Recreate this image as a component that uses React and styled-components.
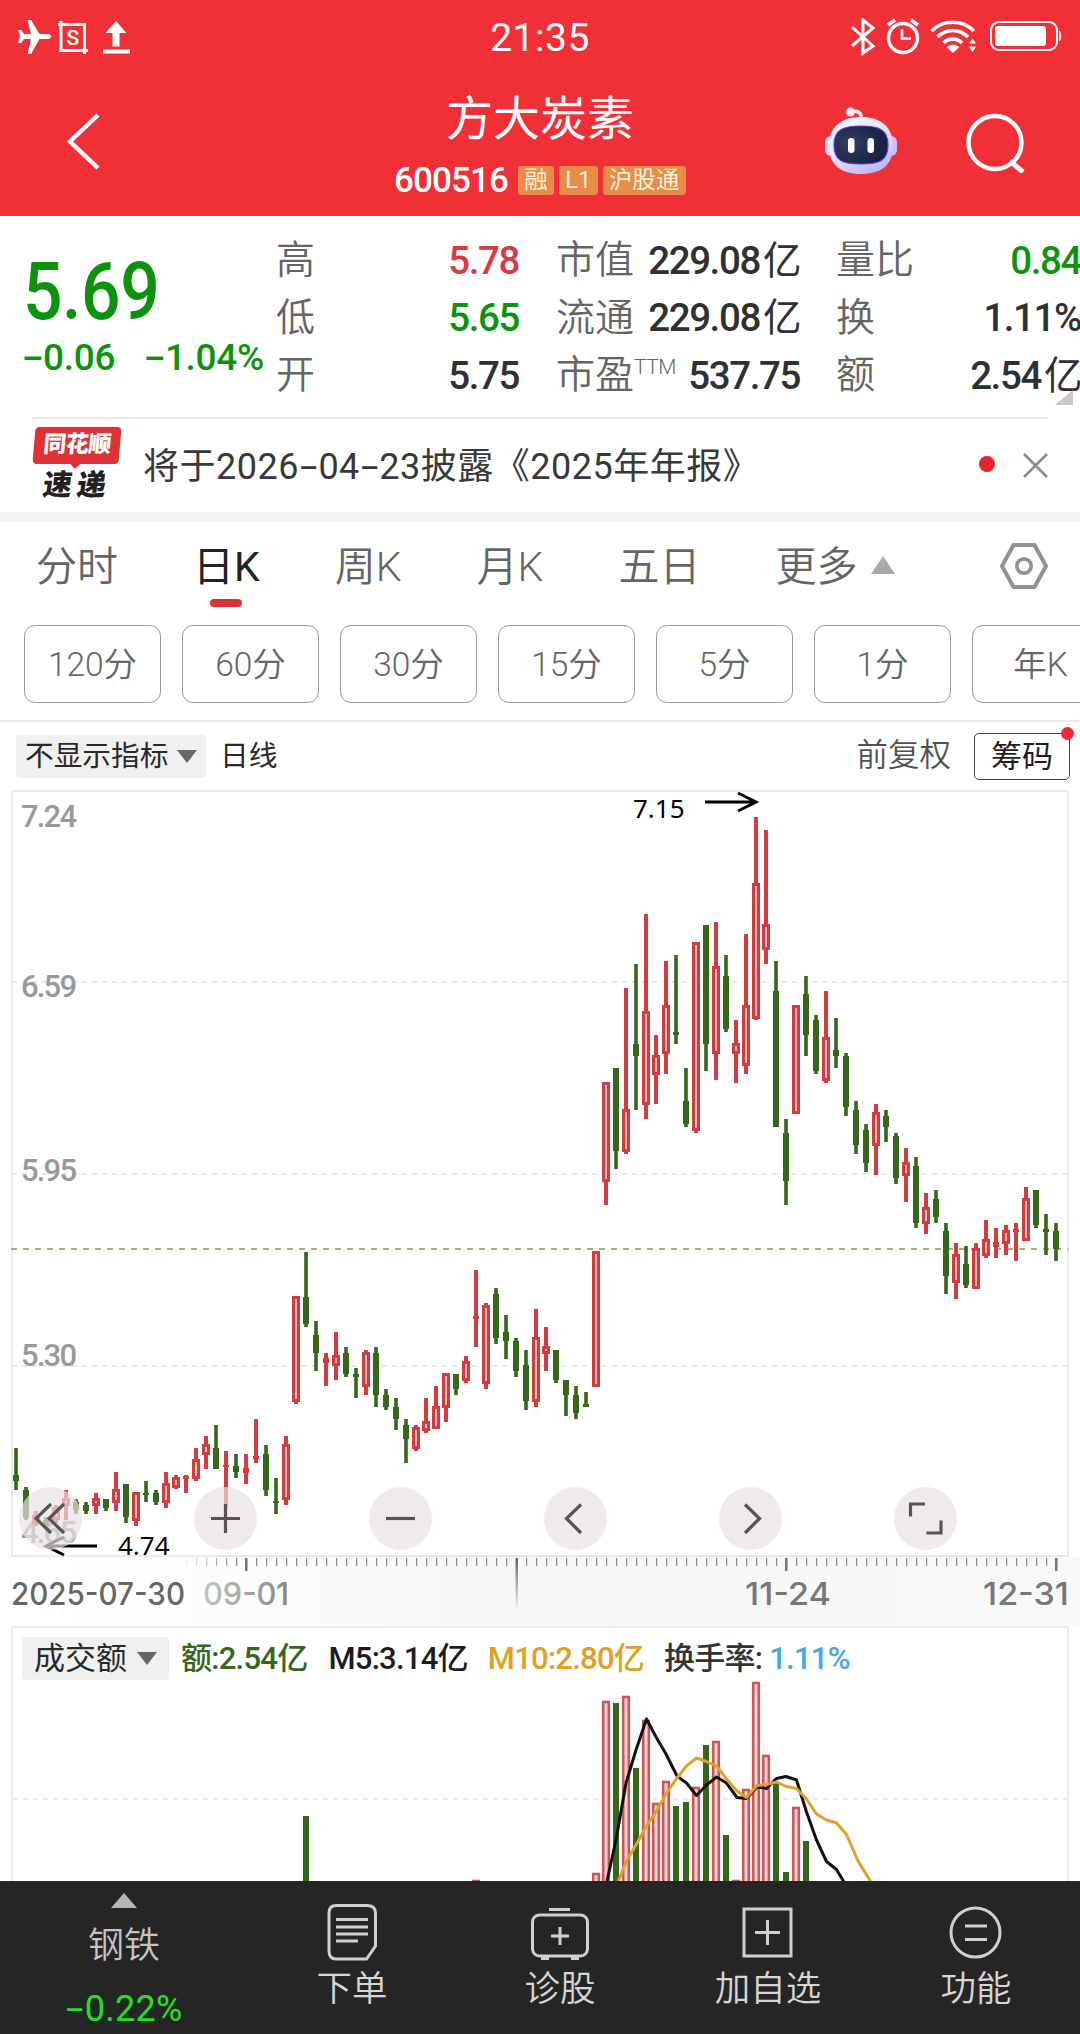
import React, { useState } from 'react';
import styled, { createGlobalStyle, css } from 'styled-components';

const GlobalStyle = createGlobalStyle`
  * {
    box-sizing: border-box;
  }
  body {
    margin: 0;
    background: #fff;
    font-family: Roboto, 'Noto Sans CJK SC', sans-serif;
    line-height: 1;
    overflow: hidden;
  }
  button {
    font: inherit;
    border: none;
    background: none;
    padding: 0;
    margin: 0;
    line-height: 1;
  }
`;

const Screen = styled.div`
  width: 1080px;
  height: 2034px;
  display: flex;
  flex-direction: column;
  background: #fff;
  overflow: hidden;
  white-space: nowrap;
`;

const Header = styled.header`
  height: 216px;
  flex: none;
  background: #f03036;
  color: #fff;
`;

const StatusBar = styled.div`
  height: 74px;
  display: grid;
  grid-template-columns: 1fr auto 1fr;
  align-items: center;
  padding: 0 17px;
  svg {
    display: block;
  }
`;

const StatusIcons = styled.div`
  display: flex;
  align-items: center;
  justify-content: ${(props) => (props.$right ? 'flex-end' : 'flex-start')};
`;

const Clock = styled.span`
  font-size: 39px;
  letter-spacing: 0.5px;
  padding-top: 2px;
`;

const TitleBar = styled.div`
  height: 142px;
  display: grid;
  grid-template-columns: 394px 1fr 394px;
`;

const BackButton = styled.button`
  justify-self: start;
  align-self: start;
  margin: 39px 0 0 65px;
  svg {
    display: block;
  }
`;

const TitleBlock = styled.div`
  display: flex;
  flex-direction: column;
`;

const StockName = styled.h1`
  margin: 21px 0 0;
  font-size: 47px;
  font-weight: 400;
  text-align: center;
`;

const CodeRow = styled.div`
  display: flex;
  align-items: center;
  margin-top: 20px;
  gap: 5px;
`;

const StockCode = styled.span`
  font-size: 35px;
  font-weight: 500;
  letter-spacing: -0.9px;
  margin-right: 5px;
  padding-top: 1px;
`;

const Tag = styled.span`
  height: 29px;
  line-height: 28px;
  padding: 0 6.3px;
  border-radius: 3px;
  background: #e98c49;
  color: #fff0d8;
  font-size: 23.5px;
`;

const HeaderTools = styled.div`
  display: flex;
  padding: 33px 0 0 138px;
  svg {
    display: block;
  }
`;

const Quote = styled.section`
  height: 201px;
  flex: none;
  position: relative;
  display: grid;
  grid-template-columns: 276px 242px 38px 243px 37px 244px;
  padding-top: 16px;
`;

const PriceBlock = styled.div`
  padding: 20px 0 0 23px;
  color: #0c930c;
  font-weight: 500;
`;

const Price = styled.div`
  font-size: 80px;
  letter-spacing: -0.5px;
  width: 150px;
  transform: scaleX(0.87);
  transform-origin: left center;
`;

const Change = styled.div`
  display: flex;
  justify-content: space-between;
  width: 241px;
  margin-top: 7px;
  font-size: 37px;
  letter-spacing: -0.3px;
`;

const StatColumn = styled.div`
  grid-column: ${(props) => props.$col};
`;

const Stat = styled.div`
  height: 57.5px;
  display: flex;
  justify-content: space-between;
  align-items: center;
`;

const StatLabel = styled.span`
  font-size: 39px;
  font-weight: 350;
  color: #646464;
  sup {
    font-size: 21px;
    font-weight: 300;
    vertical-align: 14px;
    line-height: 0;
    letter-spacing: -0.5px;
  }
`;

const StatValue = styled.span`
  font-size: 38.5px;
  font-weight: 500;
  letter-spacing: -1.4px;
  margin-right: -1px;
  color: ${(props) => props.$color || '#303030'};
`;

const Unit = styled.span`
  font-weight: 400;
  margin-left: 3px;
`;

const Corner = styled.i`
  position: absolute;
  right: 7px;
  top: 174px;
  border-left: 18px solid transparent;
  border-bottom: 15px solid #c9c9c9;
`;

const News = styled.section`
  height: 95px;
  flex: none;
  margin: 0 32px;
  border-top: 2px solid #e9eaea;
  display: flex;
  align-items: center;
`;

const NewsBadge = styled.div`
  width: 90px;
  height: 74px;
  margin-top: -3px;
  display: flex;
  flex-direction: column;
  align-items: center;
  font-weight: 900;
`;

const BadgeTop = styled.span`
  position: relative;
  width: 86px;
  height: 37px;
  line-height: 35px;
  border-radius: 4px;
  background: #de3236;
  color: #fff;
  font-size: 23px;
  letter-spacing: -0.5px;
  text-align: center;
  transform: skewX(-5deg);
  &::after {
    content: '';
    position: absolute;
    left: 37px;
    top: 36px;
    border: 6px solid transparent;
    border-top-color: #de3236;
    border-bottom: 0;
  }
`;

const BadgeBottom = styled.span`
  margin-top: 7px;
  font-size: 29px;
  letter-spacing: 5px;
  color: #222;
  transform: skewX(-8deg);
`;

const NewsText = styled.p`
  margin: 2px 0 0 21px;
  flex: 1;
  font-size: 36px;
  font-weight: 400;
  letter-spacing: 0.5px;
  color: #383838;
`;

/* wide hyphen, as the number font of the app draws it */
const DashBox = styled.span`
  display: inline-block;
  width: 0.54em;
  text-align: center;
  letter-spacing: 0;
  transform: scaleX(1.75);
`;

const RedDot = styled.i`
  width: 16px;
  height: 16px;
  border-radius: 50%;
  background: #e3262e;
  margin: -3px 28px 0 0;
`;

const Band = styled.div`
  height: 10px;
  flex: none;
  background: #f4f3f4;
`;

const Tabs = styled.nav`
  height: 103px;
  flex: none;
  display: flex;
  align-items: flex-start;
  padding: 23px 32px 0 36px;
`;

const Tab = styled.button`
  position: relative;
  height: 44px;
  margin-right: ${(props) => props.$gap}px;
  font-size: 41px;
  font-weight: 350;
  color: #646464;
  ${(props) => props.$active && css`
    font-weight: 400;
    color: #222;
    &::after {
      content: '';
      position: absolute;
      left: 50%;
      top: 54px;
      width: 32px;
      height: 8px;
      margin-left: -16px;
      border-radius: 4px;
      background: #db3036;
    }
  `}
`;

const Triangle = styled.i`
  display: inline-block;
  border-left: ${(props) => props.$w / 2}px solid transparent;
  border-right: ${(props) => props.$w / 2}px solid transparent;
  ${(props) => (props.$up
    ? css`border-bottom: ${props.$h}px solid ${props.$color};`
    : css`border-top: ${props.$h}px solid ${props.$color};`)}
`;

const TabArrow = styled.span`
  margin: 11px auto 0 13px;
  line-height: 0;
`;

const Periods = styled.div`
  height: 95px;
  flex: none;
  display: flex;
  gap: 21px;
  padding: 0 0 17px 24px;
  overflow: hidden;
`;

const Period = styled.button`
  flex: none;
  width: 137px;
  height: 78px;
  padding-top: 2px;
  border: 1.5px solid #9c9c9c;
  border-radius: 11px;
  font-size: 33.5px;
  font-weight: 350;
  color: #666;
`;

const IndicatorBar = styled.div`
  height: 70px;
  flex: none;
  border-top: 2px solid #e9e9ea;
  display: flex;
  align-items: center;
  padding: 0 10px 0 16px;
  font-size: 28.7px;
  color: #2a2a2a;
`;

const Chip = styled.button`
  display: flex;
  align-items: center;
  justify-content: space-between;
  width: ${(props) => props.$w}px;
  height: 43px;
  padding: 0 ${(props) => props.$px}px;
  border-radius: 4px;
  background: #f0f0f1;
  color: #2a2a2a;
`;

const LineName = styled.span`
  margin-left: 14px;
`;

const Adjust = styled.span`
  margin-left: auto;
  margin-right: 23px;
  font-size: 31.5px;
  font-weight: 350;
  color: #505050;
`;

const CostButton = styled.button`
  position: relative;
  width: 96px;
  height: 47px;
  border: 1.5px solid #444;
  border-radius: 5px;
  font-size: 31px;
  color: #1e1e1e;
  &::after {
    content: '';
    position: absolute;
    right: -5px;
    top: -7px;
    width: 13px;
    height: 13px;
    border-radius: 50%;
    background: #f8253b;
  }
`;

const ChartArea = styled.section`
  height: 767px;
  flex: none;
  position: relative;
  svg {
    display: block;
    overflow: visible;
  }
`;

const ChartControls = styled.div`
  position: absolute;
  left: 19px;
  top: 697px;
  display: flex;
  gap: 112px;
`;

const RoundButton = styled.button`
  width: 63px;
  height: 63px;
  border-radius: 50%;
  background: rgba(232, 227, 229, 0.7);
`;

const Axis = styled.div`
  height: 69px;
  flex: none;
  background: linear-gradient(to right, #fff 60px, #f6f7f7 480px, #f8f8f8);
  svg {
    display: block;
  }
`;

const Volume = styled.section`
  height: 255px;
  flex: none;
  margin: 0 11px;
  border: 2px solid #ebebeb;
  border-bottom: none;
  overflow: hidden;
`;

const VolumeHead = styled.div`
  height: 53px;
  display: flex;
  align-items: center;
  padding: 8px 0 0 9px;
  font-size: 31px;
  color: #2a2a2a;
  span {
    font-weight: 500;
    letter-spacing: -0.75px;
  }
`;

const Figure = styled.span`
  margin-left: ${(props) => props.$ml}px;
  color: ${(props) => props.$color};
`;

const BottomNav = styled.footer`
  height: 153px;
  flex: none;
  display: grid;
  grid-template-columns: 248px repeat(4, 208px);
  background: #252525;
  color: #d6d6d6;
`;

const Sector = styled.div`
  display: flex;
  flex-direction: column;
  align-items: center;
  padding-top: 12px;
  font-size: 36px;
  line-height: 36px;
  font-weight: 350;
  b {
    height: 36px;
    font-weight: 400;
    color: #22e022;
    margin-top: 27px;
    letter-spacing: 0.3px;
  }
  span {
    height: 36px;
  }
`;

const SectorName = styled.span`
  margin-top: 20px;
  color: #c4c4c4;
`;

const NavItem = styled.button`
  display: flex;
  flex-direction: column;
  align-items: center;
  padding-top: 20px;
  font-size: 35.5px;
  font-weight: 350;
  color: #d6d6d6;
  span {
    margin-top: 11px;
  }
`;

const UP = '#d43a3e';
const DOWN = '#35661a';

// [direction, high, body top, body bottom, low], one per trading day
const candles = [
  ['d', 1448, 1475, 1481, 1490], ['d', 1487, 1490, 1518, 1520], ['u', 1511, 1515, 1524, 1526],
  ['d', 1517, 1520, 1525, 1528], ['u', 1505, 1507, 1520, 1523], ['u', 1490, 1498, 1506, 1520],
  ['d', 1499, 1502, 1510, 1514], ['d', 1502, 1505, 1511, 1514], ['u', 1493, 1498, 1506, 1514],
  ['d', 1499, 1499, 1508, 1511], ['u', 1472, 1489, 1503, 1511], ['d', 1484, 1484, 1517, 1523],
  ['u', 1492, 1492, 1521, 1526], ['d', 1481, 1493, 1495, 1502], ['d', 1490, 1493, 1502, 1505],
  ['u', 1472, 1483, 1503, 1508], ['u', 1475, 1477, 1488, 1489], ['u', 1475, 1476, 1479, 1493],
  ['u', 1448, 1459, 1479, 1481], ['u', 1436, 1444, 1455, 1469], ['d', 1425, 1448, 1469, 1469],
  ['u', 1451, 1465, 1467, 1507], ['d', 1454, 1466, 1472, 1478], ['u', 1454, 1468, 1473, 1484],
  ['u', 1419, 1456, 1459, 1463], ['d', 1445, 1454, 1490, 1496], ['d', 1478, 1501, 1503, 1514],
  ['u', 1436, 1444, 1500, 1505], ['u', 1296, 1296, 1402, 1404], ['d', 1252, 1297, 1324, 1327],
  ['d', 1321, 1335, 1353, 1371], ['u', 1353, 1358, 1363, 1386], ['u', 1332, 1355, 1366, 1380],
  ['d', 1347, 1353, 1374, 1377], ['d', 1368, 1374, 1377, 1398], ['u', 1350, 1352, 1387, 1395],
  ['d', 1347, 1353, 1395, 1407], ['d', 1389, 1395, 1407, 1410], ['d', 1398, 1407, 1419, 1430],
  ['d', 1419, 1425, 1439, 1463], ['u', 1425, 1427, 1449, 1451], ['u', 1398, 1421, 1431, 1433],
  ['u', 1386, 1406, 1429, 1429], ['u', 1373, 1373, 1408, 1422], ['d', 1374, 1374, 1389, 1395],
  ['u', 1356, 1361, 1381, 1383], ['u', 1270, 1316, 1319, 1347], ['u', 1303, 1305, 1384, 1389],
  ['d', 1288, 1294, 1338, 1344], ['d', 1315, 1332, 1341, 1359], ['d', 1338, 1341, 1371, 1377],
  ['d', 1350, 1365, 1401, 1410], ['u', 1309, 1337, 1402, 1407], ['u', 1327, 1346, 1354, 1371],
  ['d', 1350, 1350, 1380, 1383], ['d', 1380, 1380, 1395, 1416], ['d', 1386, 1395, 1413, 1419],
  ['d', 1392, 1404, 1407, 1407], ['u', 1251, 1251, 1387, 1387], ['u', 1082, 1082, 1182, 1205],
  ['d', 1068, 1068, 1151, 1169], ['u', 988, 1109, 1152, 1154], ['d', 964, 1044, 1056, 1110],
  ['u', 914, 1011, 1105, 1119], ['u', 1035, 1055, 1075, 1104], ['u', 961, 1005, 1054, 1074],
  ['d', 955, 1032, 1035, 1044], ['d', 1068, 1101, 1124, 1127], ['u', 942, 942, 1131, 1133],
  ['d', 925, 925, 1044, 1071], ['u', 922, 966, 1054, 1080], ['d', 955, 976, 1029, 1032],
  ['u', 1020, 1043, 1054, 1083], ['u', 934, 1005, 1066, 1074], ['u', 817, 883, 1019, 1020],
  ['u', 830, 924, 950, 964], ['d', 961, 991, 1127, 1127], ['d', 1119, 1133, 1181, 1205],
  ['u', 1005, 1005, 1114, 1114], ['d', 976, 994, 1035, 1056], ['d', 1015, 1020, 1071, 1074],
  ['u', 991, 1037, 1081, 1083], ['d', 1018, 1050, 1056, 1068], ['d', 1053, 1056, 1107, 1116],
  ['d', 1101, 1110, 1145, 1154], ['d', 1124, 1130, 1163, 1172], ['u', 1104, 1112, 1146, 1175],
  ['d', 1110, 1116, 1127, 1142], ['d', 1133, 1136, 1178, 1184], ['u', 1148, 1162, 1176, 1202],
  ['d', 1157, 1166, 1223, 1228], ['u', 1193, 1207, 1224, 1234], ['d', 1190, 1199, 1217, 1223],
  ['d', 1223, 1231, 1276, 1294], ['u', 1243, 1254, 1283, 1299], ['d', 1246, 1264, 1285, 1288],
  ['u', 1243, 1248, 1289, 1289], ['u', 1220, 1239, 1256, 1258], ['u', 1228, 1242, 1247, 1258],
  ['u', 1225, 1230, 1244, 1255], ['u', 1223, 1229, 1232, 1261], ['u', 1187, 1198, 1241, 1241],
  ['d', 1190, 1190, 1225, 1228], ['d', 1214, 1229, 1232, 1255], ['d', 1223, 1231, 1249, 1261],
];

// day index -> [direction, top of the bar]
const volumes = {
  29: ['d', 1816], 46: ['u', 1880], 58: ['u', 1873], 59: ['u', 1701], 60: ['d', 1703],
  61: ['u', 1696], 62: ['d', 1768], 63: ['u', 1720], 64: ['u', 1803], 65: ['u', 1781],
  66: ['d', 1806], 67: ['d', 1802], 68: ['u', 1787], 69: ['d', 1745], 70: ['u', 1741],
  71: ['d', 1835], 72: ['u', 1880], 73: ['u', 1789], 74: ['u', 1682], 75: ['u', 1755],
  76: ['d', 1782], 77: ['d', 1872], 78: ['u', 1807], 79: ['d', 1841],
};

const ma5 = '607,1881 616,1840 626,1783 636,1750 646.500,1719 656,1737 666,1754 677,1776 686.500,1783 696.500,1795.500 706.500,1785 716.500,1777 726.500,1783 737,1797.500 746.500,1798.500 757,1787 766.500,1788.500 776.500,1778.500 786,1776.500 796.500,1780 806.500,1812 816.500,1840 826.500,1861.500 836.500,1869.500 844,1882';
const ma10 = '618,1882 627,1860 636,1845 646.500,1826 656,1812 666,1794 677,1778 686.500,1766 696.500,1758 706.500,1761.500 716.500,1766 726.500,1779 737,1791 746.500,1797.500 757,1785.500 766.500,1784.500 776.500,1782 786,1786.500 796.500,1788.500 806.500,1799 816.500,1814 826.500,1820 836.500,1823 846.500,1834.500 858,1861 871,1882';

const dayX = (i) => 16 + i * 10;

const Dash = () => <DashBox>-</DashBox>;

const withDashes = (text) => text.split('-').map((part, i) => (
  <React.Fragment key={i}>
    {i > 0 && <Dash />}
    {part}
  </React.Fragment>
));

const Candle = ({ x, data }) => {
  const [dir, high, top, bottom, low] = data;
  if (dir === 'd') {
    return (
      <g fill={DOWN}>
        <rect x={x - 1.8} y={high} width="3.600" height={low - high} />
        <rect x={x - 3} y={top} width="6" height={bottom - top} />
      </g>
    );
  }
  const h = bottom - top;
  return (
    <g fill={UP}>
      <rect x={x - 2} y={high} width="4" height={low - high} />
      {h > 5
        ? <rect x={x - 4} y={top} width="8" height={h} />
        : <rect x={x - 3} y={top} width="6" height={h} />}
      {h > 7 && <rect x={x - 1} y={top + 3} width="2" height={h - 6} fill="#f9c4c0" />}
    </g>
  );
};

const priceLabels = [['7.24', 827], ['6.59', 997], ['5.95', 1181], ['5.30', 1366], ['4.65', 1543]];

const KLine = () => (
  <svg width="1080" height="767" viewBox="0 790 1080 767">
    <rect x="12" y="791" width="1056" height="765" fill="none" stroke="#ebebeb" strokeWidth="2" />
    {[982, 1174, 1366].map((y) => (
      <path key={y} d={`M12 ${y}H1068`} stroke="#e2e2e2" strokeWidth="1.600" strokeDasharray="5 5" />
    ))}
    <path d="M11 1249H1068" stroke="#b9a677" strokeWidth="2" strokeDasharray="6 6" />
    <g fill="#999" fontSize="31" fontWeight="500">
      {priceLabels.map(([label, y]) => (
        <text key={label} x="21" y={y} textLength="56">{label}</text>
      ))}
    </g>
    {candles.map((c, i) => <Candle key={i} x={dayX(i)} data={c} />)}
    <g fill="none" stroke="#000" strokeWidth="3">
      <path d="M705 802H755M738 793L756 802L738 811" />
      <path d="M97 1546H48M64 1537L46 1546L64 1555" />
    </g>
    <g fontFamily="Noto Sans" fontSize="26" fill="#000">
      <text x="633" y="818">7.15</text>
      <text x="118" y="1555">4.74</text>
    </g>
  </svg>
);

const controls = [
  'M32 17L17 31.500L32 46M45 17L30 31.500L45 46',
  'M31.500 17V46M17 31.500H46',
  'M17 31.500H46',
  'M37 17.500L22.500 31.500L37 46',
  'M26 17.500L40.500 31.500L26 46',
  'M16.500 29.500V17H31M47 33.500V46H32.500',
];

const TimeAxis = () => {
  const ticks = [];
  for (let x = 186; x <= 1056; x += 10) {
    ticks.push(x);
  }
  return (
    <svg width="1080" height="69" viewBox="0 1557 1080 69">
      <defs>
        <linearGradient id="fade" x1="0" x2="1" y1="0" y2="0">
          <stop offset="0" stopColor="#c4c4c4" />
          <stop offset="1" stopColor="#858585" />
        </linearGradient>
        <linearGradient id="cursor" x1="0" x2="0" y1="0" y2="1">
          <stop offset="0" stopColor="#666" />
          <stop offset="1" stopColor="#666" stopOpacity="0" />
        </linearGradient>
      </defs>
      {ticks.map((x) => (
        <rect
          key={x}
          x={x}
          y="1558"
          width="1.200"
          height="8"
          fill="#8a8a8a"
          opacity={Math.min(1, (x - 176) / 60)}
        />
      ))}
      {[246, 786, 1056].map((x) => (
        <rect key={x} x={x - 1} y="1558" width="2.500" height="13" fill="#777" />
      ))}
      <rect x="515.500" y="1558" width="2.500" height="52" fill="url(#cursor)" />
      <g fontFamily="Inter" fontWeight="500" fontSize="31" fill="#777">
        <text x="11" y="1605" textLength="174" lengthAdjust="spacingAndGlyphs" fill="#666">2025-07-30</text>
        <text x="203" y="1605" textLength="86" lengthAdjust="spacingAndGlyphs" fill="url(#fade)">09-01</text>
        <text x="745" y="1605" textLength="86" lengthAdjust="spacingAndGlyphs">11-24</text>
        <text x="983" y="1605" textLength="86" lengthAdjust="spacingAndGlyphs">12-31</text>
      </g>
    </svg>
  );
};

const VolumeChart = () => (
  <svg width="1054" height="200" viewBox="13 1681 1054 200" style={{ display: 'block' }}>
    <path d="M13 1799H1067" stroke="#e2e2e2" strokeWidth="1.600" strokeDasharray="5 5" />
    {Object.entries(volumes).map(([day, [dir, top]]) => {
      const x = dayX(Number(day));
      return dir === 'd'
        ? <rect key={day} x={x - 3} y={top} width="6" height={1890 - top} fill={DOWN} />
        : <rect key={day} x={x - 2.8} y={top + 1} width="5.600" height={1890 - top} fill="#fbd6d5" stroke="#cd5559" strokeWidth="2.600" />;
    })}
    <polyline points={ma5} fill="none" stroke="#111" strokeWidth="3" strokeLinejoin="round" />
    <polyline points={ma10} fill="none" stroke="#e2a126" strokeWidth="3" strokeLinejoin="round" />
  </svg>
);

const Robot = () => (
  <svg width="74" height="68" viewBox="0 0 74 68">
    <defs>
      <linearGradient id="shell" x1="0" x2="0.600" y1="0" y2="1">
        <stop offset="0" stopColor="#fff" />
        <stop offset="0.600" stopColor="#e4e0fa" />
        <stop offset="1" stopColor="#bdb9f3" />
      </linearGradient>
      <radialGradient id="face" cx="0.300" cy="0.450" r="0.800">
        <stop offset="0" stopColor="#323e60" />
        <stop offset="1" stopColor="#121b40" />
      </radialGradient>
    </defs>
    <path d="M27 5C34 3 38 6 37 12" fill="none" stroke="#f7eef4" strokeWidth="3.500" />
    <circle cx="26.500" cy="5" r="4.500" fill="#f4eaf3" />
    <rect x="1" y="29" width="14" height="20" rx="6" fill="#e4def6" />
    <rect x="59" y="29" width="14" height="20" rx="6" fill="#c9c1f4" />
    <path d="M37 10C57 10 69 20 69 39C69 58 57 67 37 67C17 67 5 58 5 39C5 20 17 10 37 10Z" fill="url(#shell)" />
    <path d="M37 19C54 19 64 22 64 38C64 54 55 57 37 57C19 57 10 54 10 38C10 22 20 19 37 19Z" fill="url(#face)" stroke="#5a3fd0" strokeWidth="1.200" />
    <rect x="24" y="31" width="6.500" height="15" rx="3.200" fill="#fff" />
    <rect x="43.500" y="31" width="6.500" height="15" rx="3.200" fill="#fff" />
  </svg>
);

const LeftStatus = () => (
  <StatusIcons>
    <svg width="114" height="38" viewBox="17 17 114 38" fill="#fff">
      <path d="M51 35.500C51 33.500 49 33 47 33H39.500L31 19H27.500L31 33H24L21 29H18L20 35.500L18 42H21L24 38H31L27.500 53H31L39.500 38H47C49 38 51 37.500 51 35.500Z" />
      <path d="M61 20V49.500H88M58 23.500H84.500V53" fill="none" stroke="#fff" strokeWidth="3" />
      <text x="72.800" y="44" fontSize="21" fontWeight="500" textAnchor="middle">S</text>
      <path d="M116 20L126.500 32H119.500V45.500H112.500V32H105.500ZM103 48.500H130V52.500H103Z" />
    </svg>
  </StatusIcons>
);

const RightStatus = () => (
  <StatusIcons $right>
    <svg width="214" height="38" viewBox="849 18 214 38" fill="none" stroke="#fff">
      <path d="M852 27L873 46L863 53V20L873 28L852 46" strokeWidth="3" />
      <circle cx="903" cy="38" r="14.500" strokeWidth="3.400" />
      <path d="M902 29V38.500H911" strokeWidth="2.600" />
      <path d="M888 25L895 20M918 25L911 20" strokeWidth="3.600" />
      <path d="M931.500 31A30 30 0 0 1 974 31M937.500 37A21 21 0 0 1 968 37M943.500 43A13 13 0 0 1 962 43" strokeWidth="3.600" />
      <path d="M946.500 47Q953 42 959.500 47L953 53ZM969 43.500L972.500 38.500L976 43.500ZM969 46.500L972.500 52L976 46.500Z" fill="#fff" stroke="none" />
      <rect x="991" y="22" width="66" height="28" rx="8" strokeWidth="2" />
      <rect x="995" y="26" width="51" height="20" rx="3" fill="#fff" stroke="none" />
      <path d="M1059.500 31Q1062.500 36 1059.500 41Z" fill="#fff" strokeWidth="1" />
    </svg>
  </StatusIcons>
);

const navItems = [
  {
    label: '下单',
    icon: (
      <>
        <path d="M13 4.500H44Q52.500 4.500 52.500 12V45L43.500 58H13Q6 58 6 50V12Q6 4.500 13 4.500Z" />
        <path d="M13 18.500H45M13 26H45M13 33H45M13 40H35" />
      </>
    ),
  },
  {
    label: '诊股',
    icon: (
      <>
        <rect x="1.500" y="14" width="55" height="41" rx="7" />
        <path d="M18 8.500H39M29 26V44M20 35H38M10 57.500H18M40 57.500H48" />
      </>
    ),
  },
  {
    label: '加自选',
    icon: (
      <>
        <rect x="5" y="8" width="47" height="47" />
        <path d="M28.500 19V44M16 31.500H41" />
      </>
    ),
  },
  {
    label: '功能',
    icon: (
      <>
        <circle cx="28.500" cy="31.500" r="24.500" />
        <path d="M18 25H40M18 38.500H40" />
      </>
    ),
  },
];

const stats = [
  { col: 2, rows: [['高', '5.78', '#d93a3f'], ['低', '5.65', '#0c930c'], ['开', '5.75']] },
  { col: 4, rows: [['市值', '229.08', null, '亿'], ['流通', '229.08', null, '亿'], ['市盈', '537.75', null, null, 'TTM']] },
  { col: 6, rows: [['量比', '0.84', '#0c930c'], ['换', '1.11%'], ['额', '2.54', null, '亿']] },
];

const tabs = [['分时', 75], ['日K', 75], ['周K', 75], ['月K', 75], ['五日', 75], ['更多', 0]];
const periods = ['120分', '60分', '30分', '15分', '5分', '1分', '年K'];

const App = () => {
  const [tab, setTab] = useState('日K');

  return (
    <Screen>
      <GlobalStyle />
      <Header>
        <StatusBar>
          <LeftStatus />
          <Clock>21:35</Clock>
          <RightStatus />
        </StatusBar>
        <TitleBar>
          <BackButton>
            <svg width="36" height="58" viewBox="0 0 36 58">
              <path d="M33 2L5 28.500L33 55" fill="none" stroke="#fff" strokeWidth="4.400" />
            </svg>
          </BackButton>
          <TitleBlock>
            <StockName>方大炭素</StockName>
            <CodeRow>
              <StockCode>600516</StockCode>
              <Tag>融</Tag>
              <Tag>L1</Tag>
              <Tag>沪股通</Tag>
            </CodeRow>
          </TitleBlock>
          <HeaderTools>
            <Robot />
            <svg width="64" height="66" viewBox="0 0 64 66" style={{ marginLeft: 66 }}>
              <path d="M46 54L59 65" stroke="#fff" strokeWidth="5" />
              <circle cx="31" cy="35.500" r="26.500" fill="none" stroke="#fff" strokeWidth="4.400" />
            </svg>
          </HeaderTools>
        </TitleBar>
      </Header>

      <Quote>
        <PriceBlock>
          <Price>5.69</Price>
          <Change>
            <span><Dash />0.06</span>
            <span><Dash />1.04%</span>
          </Change>
        </PriceBlock>
        {stats.map((s) => (
          <StatColumn key={s.col} $col={s.col}>
            {s.rows.map(([label, value, color, unit, sup]) => (
              <Stat key={label}>
                <StatLabel>{label}{sup && <sup>{sup}</sup>}</StatLabel>
                <StatValue $color={color}>
                  {value}
                  {unit && <Unit>{unit}</Unit>}
                </StatValue>
              </Stat>
            ))}
          </StatColumn>
        ))}
        <Corner />
      </Quote>

      <News>
        <NewsBadge>
          <BadgeTop>同花顺</BadgeTop>
          <BadgeBottom>速递</BadgeBottom>
        </NewsBadge>
        <NewsText>{withDashes('将于2026-04-23披露《2025年年报》')}</NewsText>
        <RedDot />
        <svg width="25" height="25" viewBox="0 0 25 25">
          <path d="M1 1L24 24M24 1L1 24" stroke="#8a8a8a" strokeWidth="2.600" />
        </svg>
      </News>
      <Band />

      <Tabs>
        {tabs.map(([name, gap]) => (
          <Tab key={name} $gap={gap} $active={name === tab} onClick={() => setTab(name)}>{name}</Tab>
        ))}
        <TabArrow><Triangle $up $w={25} $h={18} $color="#a9a9a9" /></TabArrow>
        <svg width="48" height="46" viewBox="0 0 48 46" fill="none" stroke="#929292" strokeLinejoin="round" style={{ marginTop: -2 }}>
          <path d="M13.500 2H34.500L46 23L34.500 44H13.500L2 23Z" strokeWidth="4" />
          <circle cx="24" cy="23" r="7.200" strokeWidth="3.800" />
        </svg>
      </Tabs>
      <Periods>
        {periods.map((p) => <Period key={p}>{p}</Period>)}
      </Periods>

      <IndicatorBar>
        <Chip $w={190} $px={9}>
          不显示指标
          <Triangle $w={20} $h={13} $color="#666" />
        </Chip>
        <LineName>日线</LineName>
        <Adjust>前复权</Adjust>
        <CostButton>筹码</CostButton>
      </IndicatorBar>

      <ChartArea>
        <KLine />
        <ChartControls>
          {controls.map((d) => (
            <RoundButton key={d}>
              <svg width="63" height="63" viewBox="0 0 63 63">
                <path d={d} fill="none" stroke="#555" strokeWidth="3.200" />
              </svg>
            </RoundButton>
          ))}
        </ChartControls>
      </ChartArea>
      <Axis>
        <TimeAxis />
      </Axis>

      <Volume>
        <VolumeHead>
          <Chip $w={147} $px={12}>
            成交额
            <Triangle $w={20} $h={13} $color="#666" />
          </Chip>
          <Figure $ml={12} $color={DOWN}>额:2.54亿</Figure>
          <Figure $ml={21} $color="#1c1c1c">M5:3.14亿</Figure>
          <Figure $ml={20} $color="#dfa023">M10:2.80亿</Figure>
          <Figure $ml={20} $color="#333">换手率:</Figure>
          <Figure $ml={7} $color="#48a6e4">1.11%</Figure>
        </VolumeHead>
        <VolumeChart />
      </Volume>

      <BottomNav>
        <Sector>
          <Triangle $up $w={26} $h={15} $color="#b5b5b5" />
          <SectorName>钢铁</SectorName>
          <b><Dash />0.22%</b>
        </Sector>
        {navItems.map((item) => (
          <NavItem key={item.label}>
            <svg width="58" height="60" viewBox="0 0 58 60" fill="none" stroke="#cfcfcf" strokeWidth="3">
              {item.icon}
            </svg>
            <span>{item.label}</span>
          </NavItem>
        ))}
      </BottomNav>
    </Screen>
  );
};

export default App;
